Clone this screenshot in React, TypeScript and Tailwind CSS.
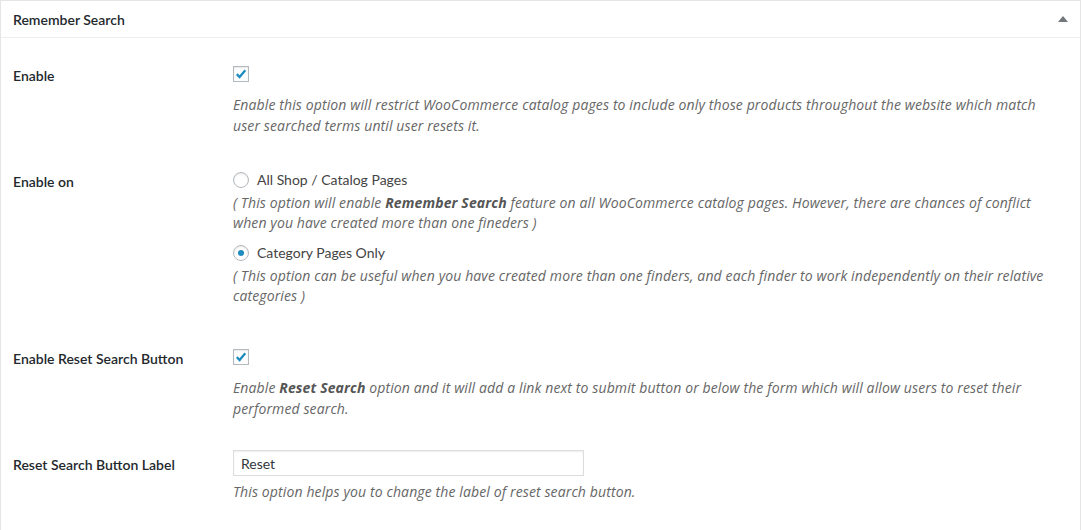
import React from "react";

function CheckBox() {
  return (
    <span className="flex h-4 w-4 items-center justify-center border border-[#b4b9be] bg-white shadow-[inset_0_1px_2px_rgba(0,0,0,0.1)]">
      <svg viewBox="0 0 16 16" className="h-4 w-4">
        <path d="M3.2 8.2 L6.4 11.4 L12.9 3.6" fill="none" stroke="#1e8cbe" strokeWidth="2.6" />
      </svg>
    </span>
  );
}

function Radio({ checked }: { checked?: boolean }) {
  return (
    <span className="flex h-4 w-4 shrink-0 items-center justify-center rounded-full border border-[#b4b9be] bg-white shadow-[inset_0_1px_2px_rgba(0,0,0,0.1)]">
      {checked && <span className="h-[6px] w-[6px] rounded-full bg-[#1e8cbe]" />}
    </span>
  );
}

function Label({ children, top }: { children: React.ReactNode; top: string }) {
  return (
    <div className={`w-[220px] shrink-0 text-[14px] font-semibold leading-5 text-[#23282d] ${top}`}>
      {children}
    </div>
  );
}

export default function App() {
  return (
    <div className="h-[530px] w-[1081px] overflow-hidden bg-white font-['Lato',sans-serif]">
      <div className="h-full border-x border-t border-[#e5e5e5]">
        <div className="flex h-[37px] items-center justify-between border-b border-[#eeeeee] pl-[12px] pr-[12px]">
          <h2 className="text-[14px] font-semibold text-[#23282d]">Remember Search</h2>
          <svg viewBox="0 0 10 6" className="h-[6px] w-[10px]">
            <polygon points="5,0 10,6 0,6" fill="#72777c" />
          </svg>
        </div>

        <div className="pl-[12px]">
          {/* Enable */}
          <div className="flex items-start">
            <Label top="mt-[28px]">Enable</Label>
            <div className="mt-[28px]">
              <CheckBox />
              <p className="mt-[12px] whitespace-nowrap font-['Open_Sans',sans-serif] text-[14px] italic leading-[21px] tracking-[0.12px] text-[#666]">
                Enable this option will restrict WooCommerce catalog pages to include only those products throughout the website which match
                <br />
                user searched terms until user resets it.
              </p>
            </div>
          </div>

          {/* Enable on */}
          <div className="flex items-start">
            <Label top="mt-[36px]">Enable on</Label>
            <div className="mt-[34px]">
              <label className="flex items-center gap-[8px] text-[14px] leading-5 text-[#444]">
                <Radio />
                All Shop / Catalog Pages
              </label>
              <p className="mt-[3px] whitespace-nowrap font-['Open_Sans',sans-serif] text-[14px] italic leading-5 tracking-[0.12px] text-[#666]">
                ( This option will enable <b className="font-bold text-[#555]">Remember Search</b> feature on all WooCommerce catalog pages. However, there are chances of conflict
                <br />
                when you have created more than one fineders )
              </p>
              <label className="mt-[10px] flex items-center gap-[8px] text-[14px] leading-5 text-[#444]">
                <Radio checked />
                Category Pages Only
              </label>
              <p className="mt-[3px] whitespace-nowrap font-['Open_Sans',sans-serif] text-[14px] italic leading-5 tracking-[0.12px] text-[#666]">
                ( This option can be useful when you have created more than one finders, and each finder to work independently on their relative
                <br />
                categories )
              </p>
            </div>
          </div>

          {/* Enable Reset Search Button */}
          <div className="flex items-start">
            <Label top="mt-[43px]">Enable Reset Search Button</Label>
            <div className="mt-[43px]">
              <CheckBox />
              <p className="mt-[12px] whitespace-nowrap font-['Open_Sans',sans-serif] text-[14px] italic leading-[21px] tracking-[0.12px] text-[#666]">
                Enable <b className="font-bold text-[#555]">Reset Search</b> option and it will add a link next to submit button or below the form which will allow users to reset their
                <br />
                performed search.
              </p>
            </div>
          </div>

          {/* Reset Search Button Label */}
          <div className="flex items-start">
            <Label top="mt-[36px]">Reset Search Button Label</Label>
            <div className="mt-[31px]">
              <input
                type="text"
                defaultValue="Reset"
                className="h-[26px] w-[351px] border border-[#dddddd] bg-white px-[7px] text-[14px] text-[#32373c] shadow-[inset_0_1px_2px_rgba(0,0,0,0.07)] outline-none"
              />
              <p className="mt-[6px] whitespace-nowrap font-['Open_Sans',sans-serif] text-[14px] italic leading-5 tracking-[0.12px] text-[#666]">
                This option helps you to change the label of reset search button.
              </p>
            </div>
          </div>
        </div>
      </div>
    </div>
  );
}
